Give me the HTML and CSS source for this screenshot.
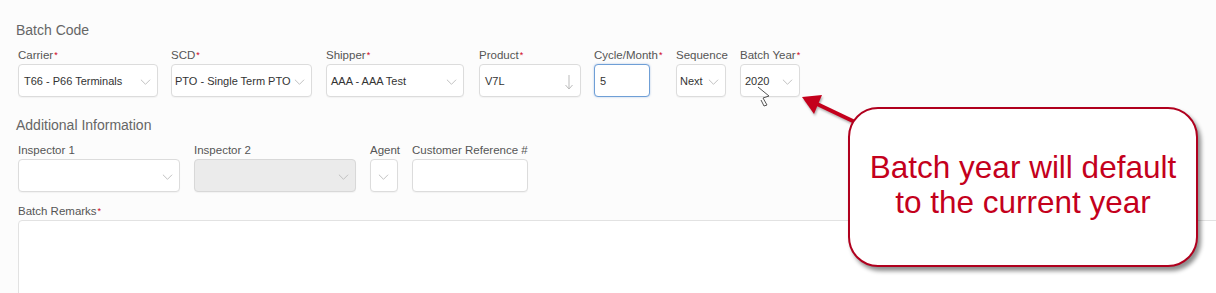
FILE: index.html
```html
<!DOCTYPE html>
<html lang="en">
<head>
    <meta charset="UTF-8">
    <title>Batch Code</title>
    <link rel="stylesheet" href="styles.css">
</head>
<body>
    <div class="page">
        <h3 class="section-title">Batch Code</h3>
        <div class="field-row">
            <div class="field w-carrier">
                <label>Carrier<span class="req">*</span></label>
                <div class="control">T66 - P66 Terminals<svg class="chev" viewBox="0 0 12 6"><polyline points="1,0.5 6,5.5 11,0.5"/></svg></div>
            </div>
            <div class="field w-scd">
                <label>SCD<span class="req">*</span></label>
                <div class="control pad-3">PTO - Single Term PTO<svg class="chev" viewBox="0 0 12 6"><polyline points="1,0.5 6,5.5 11,0.5"/></svg></div>
            </div>
            <div class="field w-shipper">
                <label>Shipper<span class="req">*</span></label>
                <div class="control pad-4">AAA - AAA Test<svg class="chev" viewBox="0 0 12 6"><polyline points="1,0.5 6,5.5 11,0.5"/></svg></div>
            </div>
            <div class="field w-product">
                <label>Product<span class="req">*</span></label>
                <div class="control">V7L<svg class="down" viewBox="0 0 8 16"><line x1="4" y1="1" x2="4" y2="15"/><polyline points="0.5,11 4,15 7.5,11"/></svg></div>
            </div>
            <div class="field w-cycle">
                <label>Cycle/Month<span class="req">*</span></label>
                <div class="control focused">5</div>
            </div>
            <div class="field w-seq">
                <label>Sequence</label>
                <div class="control pad-3">Next<svg class="chev" viewBox="0 0 12 6"><polyline points="1,0.5 6,5.5 11,0.5"/></svg></div>
            </div>
            <div class="field w-year">
                <label>Batch Year<span class="req">*</span></label>
                <div class="control pad-4">2020<svg class="chev" viewBox="0 0 12 6"><polyline points="1,0.5 6,5.5 11,0.5"/></svg></div>
            </div>
        </div>

        <h3 class="section-title second">Additional Information</h3>
        <div class="field-row">
            <div class="field w-insp">
                <label>Inspector 1</label>
                <div class="control"><svg class="chev" viewBox="0 0 12 6"><polyline points="1,0.5 6,5.5 11,0.5"/></svg></div>
            </div>
            <div class="field w-insp">
                <label>Inspector 2</label>
                <div class="control disabled"><svg class="chev" viewBox="0 0 12 6"><polyline points="1,0.5 6,5.5 11,0.5"/></svg></div>
            </div>
            <div class="field w-agent">
                <label>Agent</label>
                <div class="control"><svg class="chev center" viewBox="0 0 12 6"><polyline points="1,0.5 6,5.5 11,0.5"/></svg></div>
            </div>
            <div class="field w-ref">
                <label>Customer Reference #</label>
                <div class="control"></div>
            </div>
        </div>

        <div class="remarks">
            <label>Batch Remarks<span class="req">*</span></label>
            <div class="textarea"></div>
        </div>

        <!-- annotation overlay -->
        <svg class="pointer" viewBox="0 0 16 22">
            <polyline points="1,1 12,10"/>
            <polyline points="12,10 6,12 10,19 7,20 4,14"/>
        </svg>
        <svg class="arrow" viewBox="0 0 60 34">
            <line x1="14" y1="8" x2="56" y2="28"/>
            <polygon points="1,2 21,0 13,19"/>
        </svg>
        <div class="callout">Batch year will default<br>to the current year</div>
    </div>
</body>
</html>
```

FILE: styles.css
```css
:root {
    --label: #555;
    --border: #dcdcdc;
    --req: #d0021b;
    --note-red: #c4001c;
}

body {
    margin: 0;
    background: #fcfcfc;
    font-family: "Liberation Sans", Arial, sans-serif;
    color: #333;
    overflow: hidden;
}

.page {
    position: relative;
    height: 293px;
    padding: 22px 0 0 16px;
    box-sizing: border-box;
    overflow: hidden;
}

.section-title {
    margin: 0 0 10px;
    font-size: 14px;
    line-height: 16px;
    font-weight: normal;
    color: #666;
}

.section-title.second {
    margin-top: 20px;
}

.field-row {
    display: flex;
    gap: 14px;
    padding-left: 2px;
}

.field {
    display: flex;
    flex-direction: column;
    flex: none;
}

.field label,
.remarks label {
    font-size: 11.5px;
    line-height: 14px;
    height: 14px;
    margin-bottom: 2px;
    color: var(--label);
    white-space: nowrap;
}

.req {
    color: var(--req);
    font-size: 9px;
    vertical-align: top;
    margin-left: 1px;
}

.w-carrier { width: 140px; margin-right: -1px; }
.w-scd { width: 141px; }
.w-shipper { width: 138px; margin-right: 1px; }
.w-product { width: 102px; margin-right: -1px; }
.w-cycle { width: 56px; margin-right: 12px; }
.w-seq { width: 50px; }
.w-year { width: 60px; }
.w-insp { width: 162px; }
.w-agent { width: 28px; }
.w-ref { width: 116px; }

.control {
    position: relative;
    height: 33px;
    box-sizing: border-box;
    border: 1px solid var(--border);
    border-radius: 4px;
    background: #fff;
    box-shadow: 0 1px 1px rgba(0,0,0,0.04);
    display: flex;
    align-items: center;
    padding: 0 6px 0 5px;
    font-size: 11px;
    color: #333;
    white-space: nowrap;
    overflow: hidden;
}

.control.pad-3 { padding-left: 3px; }
.control.pad-4 { padding-left: 4px; }

.control.focused {
    border-color: #6f9fd6;
    box-shadow: 0 0 2px rgba(90,140,210,0.5);
}

.control.disabled {
    background: #ebebeb;
    border-color: #d8d8d8;
}

.chev {
    position: absolute;
    right: 6px;
    top: 14px;
    width: 11px;
    height: 6px;
    fill: none;
    stroke: #bbb;
    stroke-width: 1;
}

.chev.center {
    right: 8px;
}

.down {
    position: absolute;
    right: 7px;
    top: 9px;
    width: 8px;
    height: 16px;
    fill: none;
    stroke: #bbb;
    stroke-width: 1;
}

.remarks {
    margin-top: 12px;
    padding-left: 2px;
}

.remarks label {
    display: block;
    margin-bottom: 2px;
}

.textarea {
    height: 100px;
    margin-right: -20px;
    border: 1px solid #e2e2e2;
    border-radius: 4px;
    background: #fff;
}

.pointer {
    position: absolute;
    left: 757px;
    top: 86px;
    width: 16px;
    height: 22px;
    fill: none;
    stroke: #555;
    stroke-width: 1;
}

.arrow {
    position: absolute;
    left: 801px;
    top: 95px;
    width: 60px;
    height: 34px;
    overflow: visible;
    filter: drop-shadow(1px 2px 1px rgba(0,0,0,0.3));
}

.arrow line {
    stroke: var(--note-red);
    stroke-width: 4;
}

.arrow polygon {
    fill: var(--note-red);
}

.callout {
    position: absolute;
    left: 848px;
    top: 107px;
    width: 350px;
    height: 160px;
    box-sizing: border-box;
    border: 2px solid #b0001e;
    border-radius: 30px;
    background: #fff;
    box-shadow: 3px 4px 4px rgba(0,0,0,0.45);
    display: flex;
    align-items: center;
    justify-content: center;
    text-align: center;
    font-size: 31.5px;
    line-height: 35px;
    color: var(--note-red);
    padding-bottom: 4px;
}
```
